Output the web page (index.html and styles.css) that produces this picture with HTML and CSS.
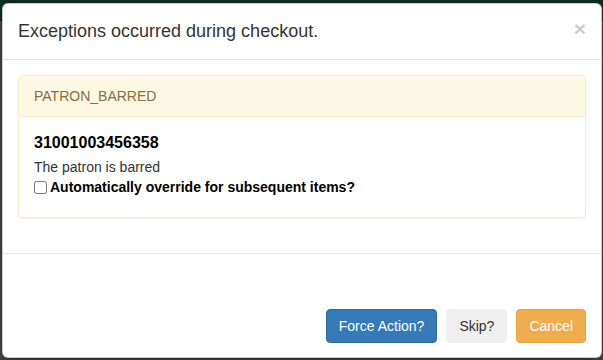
FILE: index.html
```html
<!DOCTYPE html>
<html lang="en">
<head>
    <meta charset="UTF-8">
    <meta name="viewport" content="width=device-width, initial-scale=1.0">
    <title>Checkout Exceptions</title>
    <link rel="stylesheet" href="styles.css">
</head>
<body>
    <div class="modal">
        <div class="modal-header">
            <h4 class="modal-title">Exceptions occurred during checkout.</h4>
            <button type="button" class="close">&times;</button>
        </div>

        <div class="modal-body">
            <div class="panel">
                <div class="panel-heading">PATRON_BARRED</div>
                <div class="panel-body">
                    <div class="barcode">31001003456358</div>
                    <div class="message">The patron is barred</div>
                    <label class="override">
                        <input type="checkbox" id="auto_override">
                        Automatically override for subsequent items?
                    </label>
                </div>
            </div>
        </div>

        <div class="modal-footer">
            <button class="btn btn-primary" type="button">Force Action?</button>
            <button class="btn btn-default" type="button">Skip?</button>
            <button class="btn btn-warning" type="button">Cancel</button>
        </div>
    </div>
</body>
</html>
```

FILE: styles.css
```css
body {
    margin: 0;
    height: 360px;
    overflow: hidden;
    background: linear-gradient(#0c3022 0, #0c3022 21px, #4c4c4c 21px);
    font-family: 'Liberation Sans', Arial, sans-serif;
    font-size: 14px;
    line-height: 20px;
    color: #333;
}

.modal {
    margin: 3px 1px 0 2px;
    background-color: #fff;
    border: 1px solid rgba(0, 0, 0, 0.2);
    border-radius: 6px;
    box-shadow: 0 5px 15px rgba(0, 0, 0, 0.5);
}

.modal-header {
    display: flex;
    justify-content: space-between;
    align-items: flex-start;
    padding: 15px;
    border-bottom: 1px solid #e5e5e5;
}

.modal-title {
    margin: 0;
    font-size: 18px;
    font-weight: normal;
    line-height: 25px;
}

.close {
    margin-top: -1px;
    padding: 0;
    border: none;
    background: none;
    font-family: inherit;
    font-size: 21px;
    font-weight: bold;
    line-height: 1;
    color: #000;
    opacity: 0.2;
    cursor: pointer;
}

.modal-body {
    padding: 15px;
}

.panel {
    margin-bottom: 20px;
    border: 1px solid #faebcc;
    border-radius: 4px;
    box-shadow: 0 1px 1px rgba(0, 0, 0, 0.05);
}

.panel-heading {
    padding: 10px 15px;
    background-color: #fcf8e3;
    color: #8a6d3b;
    border-bottom: 1px solid #faebcc;
    border-radius: 3px 3px 0 0;
}

.panel-body {
    padding: 16px 15px 20px;
}

.barcode {
    font-size: 16px;
    font-weight: bold;
    color: #000;
}

.message {
    margin-top: 4px;
}

.override {
    display: flex;
    align-items: center;
    font-weight: bold;
    color: #000;
}

.override input {
    width: 13px;
    height: 13px;
    margin: 0 3px 0 0;
}

.modal-footer {
    display: flex;
    justify-content: flex-end;
    gap: 9px;
    padding: 55px 15px 14px;
    border-top: 1px solid #e5e5e5;
}

.btn {
    padding: 6px 12px;
    border: 1px solid transparent;
    border-radius: 4px;
    font-family: inherit;
    font-size: 14px;
    line-height: 20px;
    cursor: pointer;
}

.btn-primary {
    background-color: #337ab7;
    border-color: #2e6da4;
    color: #fff;
}

.btn-default {
    background-color: #efefef;
    border-color: #efefef;
    color: #333;
}

.btn-warning {
    background-color: #f0ad4e;
    border-color: #eea236;
    color: #fff;
}
```
